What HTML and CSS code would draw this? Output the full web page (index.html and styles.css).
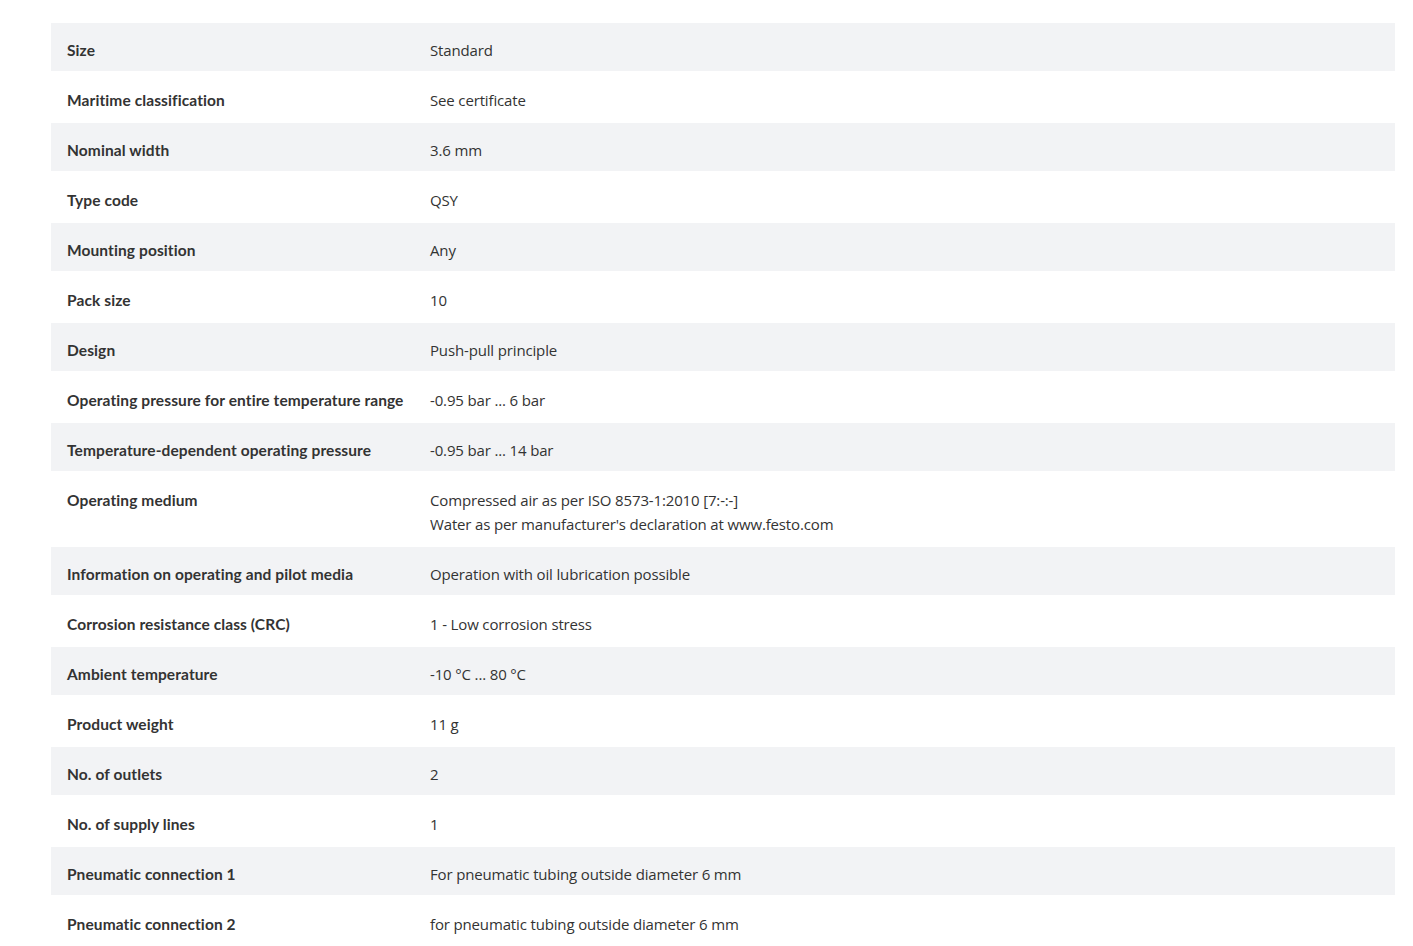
FILE: index.html
```html
<!DOCTYPE html>
<html lang="en">
  <head>
    <meta charset="UTF-8" />
    <meta name="viewport" content="width=device-width, initial-scale=1.0" />
    <title>Technical data</title>
    <link rel="stylesheet" href="styles.css">
  </head>
  <body>
    <div id="wrapper">
      <!-- technical data table -->
      <table class="specs">
        <tbody>
          <tr><th>Size</th><td>Standard</td></tr>
          <tr><th>Maritime classification</th><td>See certificate</td></tr>
          <tr><th>Nominal width</th><td>3.6 mm</td></tr>
          <tr><th>Type code</th><td>QSY</td></tr>
          <tr><th>Mounting position</th><td>Any</td></tr>
          <tr><th>Pack size</th><td>10</td></tr>
          <tr><th>Design</th><td>Push-pull principle</td></tr>
          <tr><th>Operating pressure for entire temperature range</th><td>-0.95 bar ... 6 bar</td></tr>
          <tr><th>Temperature-dependent operating pressure</th><td>-0.95 bar ... 14 bar</td></tr>
          <tr><th>Operating medium</th><td>Compressed air as per ISO 8573-1:2010 [7:-:-]<br>Water as per manufacturer's declaration at www.festo.com</td></tr>
          <tr><th>Information on operating and pilot media</th><td>Operation with oil lubrication possible</td></tr>
          <tr><th>Corrosion resistance class (CRC)</th><td>1 - Low corrosion stress</td></tr>
          <tr><th>Ambient temperature</th><td>-10 °C ... 80 °C</td></tr>
          <tr><th>Product weight</th><td>11 g</td></tr>
          <tr><th>No. of outlets</th><td>2</td></tr>
          <tr><th>No. of supply lines</th><td>1</td></tr>
          <tr><th>Pneumatic connection 1</th><td>For pneumatic tubing outside diameter 6 mm</td></tr>
          <tr><th>Pneumatic connection 2</th><td>for pneumatic tubing outside diameter 6 mm</td></tr>
        </tbody>
      </table>
    </div>
  </body>
</html>
```

FILE: styles.css
```css
body {
  font-family: "Open Sans", Arial, sans-serif;
  background-color: #ffffff;
  color: #333333;
  margin: 0;
  padding: 0;
}

#wrapper {
  padding: 22px 18px 0 51px;
}

.specs {
  width: 100%;
  table-layout: fixed;
  border-collapse: separate;
  border-spacing: 0;
  font-size: 15px;
  line-height: 24px;
}

.specs th,
.specs td {
  padding: 15px 16px 9px;
  border-top: 1px solid #ffffff;
  border-bottom: 1px solid #ffffff;
  text-align: left;
  vertical-align: top;
}

.specs th {
  width: 363px;
  box-sizing: border-box;
  font-family: Lato, "Open Sans", sans-serif;
  font-size: 15.5px;
  font-weight: 700;
  letter-spacing: 0.1px;
  white-space: nowrap;
}

.specs td {
  font-weight: 400;
  letter-spacing: -0.15px;
}

.specs tr:nth-child(odd) {
  background-color: #f2f3f5;
}
```
